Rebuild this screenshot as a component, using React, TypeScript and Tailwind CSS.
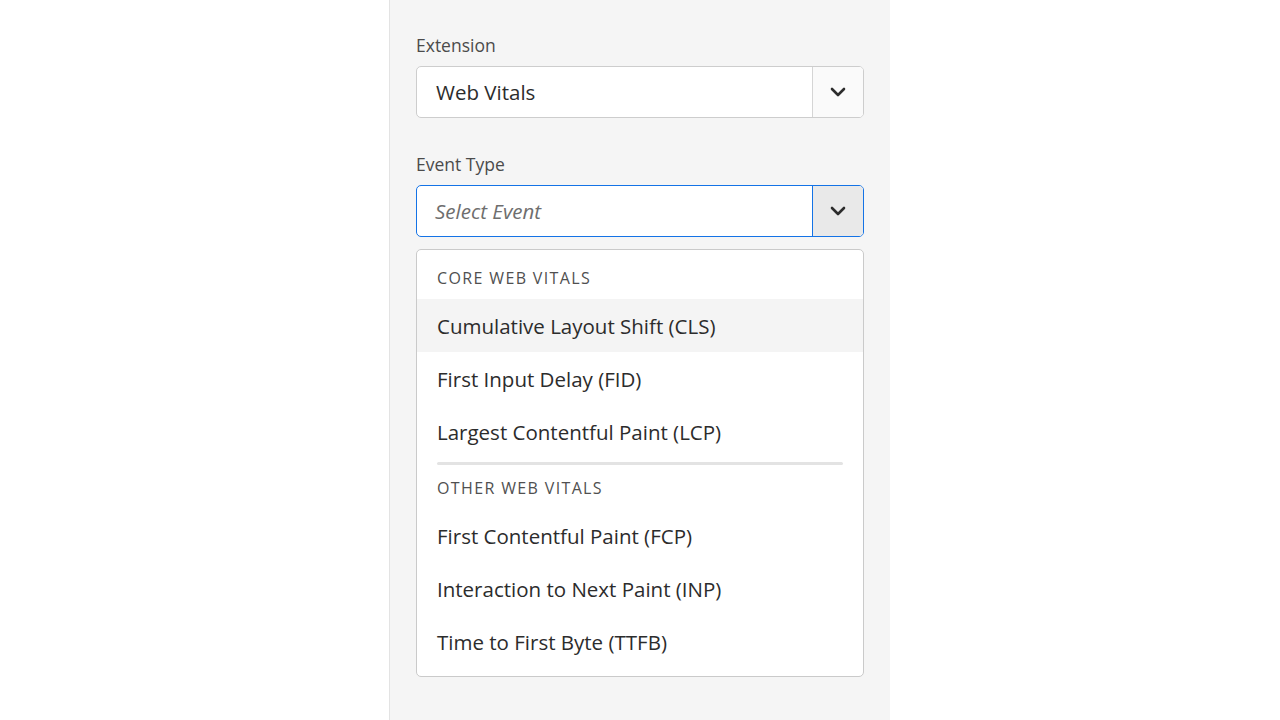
import React from "react";

const font = { fontFamily: "'Open Sans', 'Noto Sans', sans-serif" };

function Chevron() {
  return (
    <svg width="16" height="10" viewBox="0 0 16 10" fill="none">
      <path d="M2 2 L8 8 L14 2" stroke="#2c2c2c" strokeWidth="2.6" strokeLinecap="round" strokeLinejoin="round" />
    </svg>
  );
}

function Item({ label, active }: { label: string; active?: boolean }) {
  return (
    <div className={`flex h-[53px] items-center px-[20px] pt-[2px] text-[20.5px] text-[#2c2c2c] ${active ? "bg-[#f4f4f4]" : ""}`}>
      {label}
    </div>
  );
}

export default function App() {
  return (
    <div className="flex h-[720px] w-full bg-white" style={font}>
      <div className="ml-[389px] flex h-full w-[501px] flex-col border-l border-[#e3e3e3] bg-[#f5f5f5] px-[26px] pt-[33px]">
        <div className="text-[17.5px] leading-[24px] text-[#4b4b4b]">Extension</div>
        <div className="mt-[9px] flex h-[52px] w-[448px] overflow-hidden rounded-[5px] border border-[#cdcdcd] bg-white">
          <div className="flex flex-1 items-center pl-[19px] pt-[1px] text-[20.5px] text-[#2c2c2c]">Web Vitals</div>
          <div className="flex w-[51px] items-center justify-center border-l border-[#d5d5d5] bg-[#fafafa]">
            <Chevron />
          </div>
        </div>
        <div className="mt-[34px] text-[17.5px] leading-[24px] text-[#4b4b4b]">Event Type</div>
        <div className="mt-[9px] flex h-[52px] w-[448px] overflow-hidden rounded-[5px] border border-[#1473e6] bg-white">
          <div className="flex flex-1 items-center pl-[18px] pt-[1px] text-[20.5px] italic text-[#6e6e6e]">Select Event</div>
          <div className="flex w-[51px] items-center justify-center border-l border-[#1473e6] bg-[#e9e9e9]">
            <Chevron />
          </div>
        </div>
        <div className="mt-[12px] w-[448px] rounded-[5px] border border-[#cacaca] bg-white pt-[7px] pb-[8px]">
          <div className="flex h-[42px] items-center px-[20px] text-[16px] tracking-[0.085em] text-[#505050]">CORE WEB VITALS</div>
          <Item label="Cumulative Layout Shift (CLS)" active />
          <Item label="First Input Delay (FID)" />
          <Item label="Largest Contentful Paint (LCP)" />
          <div className="mx-[20px] mt-[4px] h-[3px] rounded bg-[#e3e3e3]" />
          <div className="flex h-[44px] items-center px-[20px] pt-[1px] text-[16px] tracking-[0.085em] text-[#505050]">OTHER WEB VITALS</div>
          <Item label="First Contentful Paint (FCP)" />
          <Item label="Interaction to Next Paint (INP)" />
          <Item label="Time to First Byte (TTFB)" />
        </div>
      </div>
    </div>
  );
}
